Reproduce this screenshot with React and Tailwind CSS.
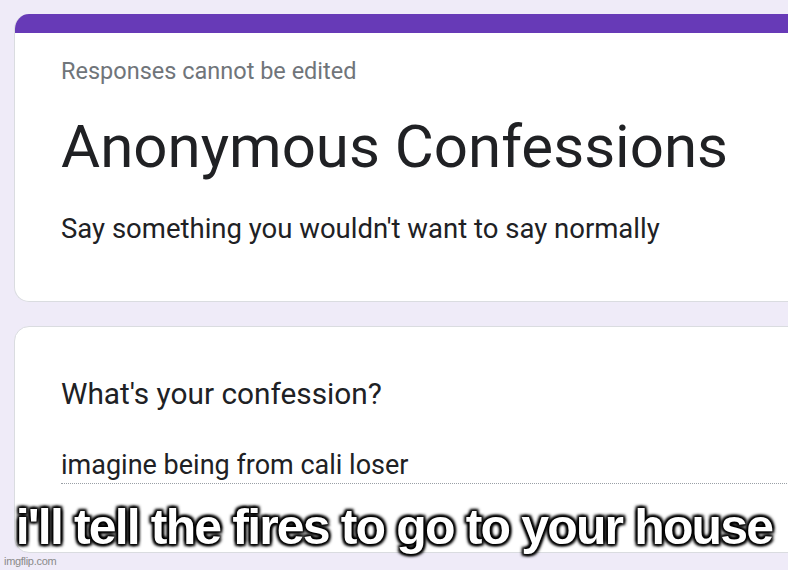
export default function App() {
  const roboto = { fontFamily: "Roboto, 'Liberation Sans', sans-serif" };
  return (
    <div className="relative w-[788px] h-[570px] overflow-hidden bg-[#efebf8]" style={roboto}>
      <div className="pl-[14px] pt-[14px] flex flex-col gap-[24px]">
        {/* header card */}
        <div className="w-[800px] rounded-[15px] overflow-hidden bg-white border-l border-b border-[#dadce0]">
          <div className="h-[19px] bg-[#673ab7]" />
          <div className="pl-[46px] pt-[23px] pb-[57px]">
            <div className="text-[23.5px] leading-[30px] text-[#70757a]">Responses cannot be edited</div>
            <div className="mt-[26px] text-[60px] leading-[70px] text-[#202124]">Anonymous Confessions</div>
            <div className="mt-[32px] text-[27.5px] leading-[30px] text-[#202124]">
              Say something you wouldn't want to say normally
            </div>
          </div>
        </div>

        {/* question card */}
        <div className="w-[800px] rounded-[15px] bg-white border border-[#dadce0] pl-[46px] pt-[50px] pb-[68px]">
          <div className="text-[29.8px] leading-[34px] text-[#202124]">What's your confession?</div>
          <div className="mt-[39px] text-[27px] leading-[30px] text-[#202124] pb-[3px] border-b border-dotted border-[#9aa0a6]">
            imagine being from cali loser
          </div>
        </div>
      </div>

      {/* meme caption */}
      <div
        className="absolute left-0 right-0 top-[502px] text-center text-white font-bold text-[50px] leading-[50px] tracking-[-1.85px] [text-shadow:0_0_3px_#000,0_0_3px_#000,2px_2px_3px_#000,-2px_-2px_3px_#000,2px_-2px_3px_#000,-2px_2px_3px_#000]"
        style={{ fontFamily: "'Liberation Sans', Arial, sans-serif" }}
      >
        i'll tell the fires to go to your house
      </div>

      <div
        className="absolute left-[4px] top-[554px] text-[11px] leading-[14px] text-[#8a8a8a] tracking-[-0.3px]"
        style={{ fontFamily: "'Liberation Sans', Arial, sans-serif" }}
      >
        imgflip.com
      </div>
    </div>
  );
}
